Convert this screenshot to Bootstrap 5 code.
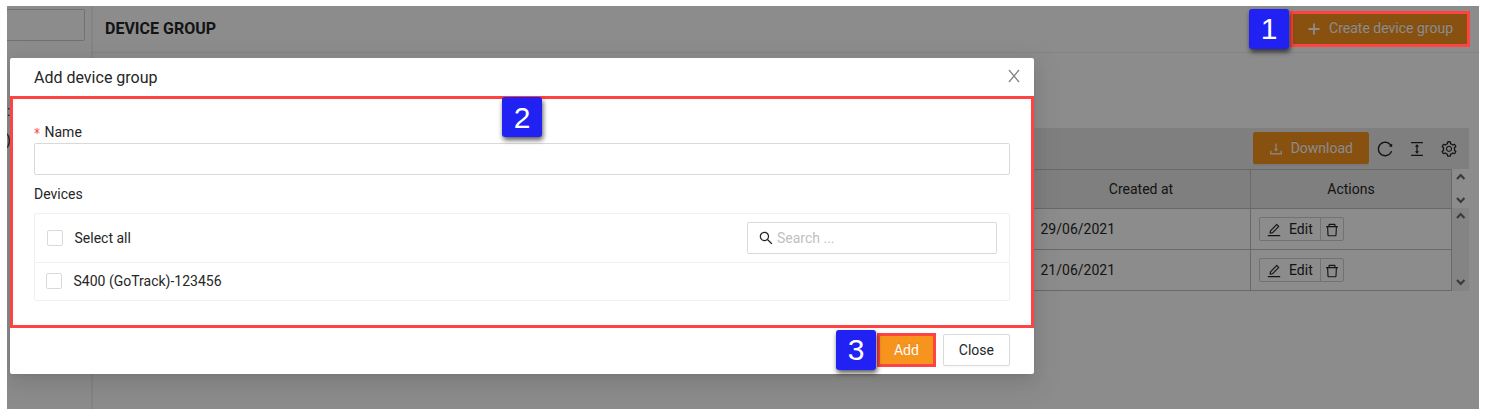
<!DOCTYPE html>
<html lang="en">
<head>
<meta charset="utf-8">
<title>Device group</title>
<link href="https://cdn.jsdelivr.net/npm/bootstrap@5.3.0/dist/css/bootstrap.min.css" rel="stylesheet">
<script src="https://cdn.jsdelivr.net/npm/bootstrap@5.3.0/dist/js/bootstrap.bundle.min.js" defer></script>
<style>
  body { font: 14px/22px Roboto, "Liberation Sans", sans-serif; color: #262626; background: #fff; width: 1486px; height: 415px; overflow: hidden; padding: 6px 7px; }
  svg { fill: currentColor; display: block; flex: none; }
  .frame { width: 1472px; height: 403px; overflow: hidden; }
  .side { width: 86px; border-right: 2px solid #f0f0f0; }
  .side-input { width: 78px; height: 32px; margin-top: 3px; border: 1px solid #d0d0d0; border-left: 0; border-radius: 0 2px 2px 0; }
  .side-cut { height: 22px; white-space: nowrap; }
  .page-head { height: 47px; border-bottom: 1px solid #f0f0f0; padding: 0 10px 0 12px; }
  .page-title { font-size: 16px; font-weight: 700; line-height: 24px; }
  .btn { --bs-btn-font-size: 14px; --bs-btn-line-height: 22px; --bs-btn-border-radius: 2px; --bs-btn-padding-y: 4px; --bs-btn-padding-x: 15px; height: 32px; }
  .btn-brand { --bs-btn-bg: #f7941d; --bs-btn-color: #fff; --bs-btn-border-color: #f7941d; --bs-btn-hover-bg: #f7941d; --bs-btn-hover-color: #fff; box-shadow: 0 2px 0 rgba(0,0,0,.045); text-shadow: 0 -1px 0 rgba(0,0,0,.12); }
  .btn-plain { --bs-btn-bg: #fff; --bs-btn-color: #262626; --bs-btn-border-color: #d9d9d9; box-shadow: 0 2px 0 rgba(0,0,0,.016); }
  .btn-icon { padding-left: 14px; }
  .btn-icon svg { margin: 1px 7px 0 0; }
  .page-head .btn { padding-top: 3px; padding-bottom: 5px; }
  .btn-marked { width: 59px; height: 34px; border: 3px solid #ff4343 !important; border-radius: 0; padding: 0; box-shadow: none; margin-right: 7px; }
  .grid-wrap { margin: 75px 10px 0 0; }
  .tools { height: 41px; background: #e8e8e8; padding-right: 11px; }
  .tools .btn { margin: 0 7px 1px 0; }
  .row-line { height: 41px; border-bottom: 1px solid #bfbfbf; }
  .head-line { height: 40px; border-top: 1px solid #bfbfbf; background: #e8e8e8; }
  .c-date { width: 217px; border-right: 1px solid #bfbfbf; padding-left: 6.500px; }
  .c-act { width: 201px; border-right: 1px solid #bfbfbf; padding-left: 8px; }
  .scroller { width: 17px; }
  .mini { height: 24px; border: 1px solid #d0d0d0; border-radius: 2px 0 0 2px; width: 62px; padding-left: 6px; }
  .mini svg { margin: 1px 7px 0 0; }
  .mini + .mini { margin-left: -1px; border-radius: 0 2px 2px 0; width: 24px; padding-left: 3px; }
  .shade { inset: 0; background: rgba(0,0,0,.45); }
  .dialog { left: 3px; top: 52px; width: 1024px; height: 316px; background: #fff; border-radius: 2px; box-shadow: 0 3px 6px -4px rgba(0,0,0,.12), 0 6px 16px 0 rgba(0,0,0,.08), 0 9px 28px 8px rgba(0,0,0,.05); }
  .dialog-head { height: 38px; padding: 0 14px 0 24px; font-size: 16px; }
  .dialog-body { height: 232px; border: 3px solid #ff4343; padding: 22px 21px 0; }
  .dialog-foot { height: 46px; padding: 0 24px 2px 0; }
  .field { height: 32px; border: 1px solid #d9d9d9; border-radius: 2px; }
  .search-field { width: 250px; padding-left: 10px; }
  .hint { color: #bfbfbf; }
  .star { width: 6px; height: 6px; margin: 0 4.500px 2px 0; stroke: #ff4d4f; }
  .list-box { border: 1px solid #f0f0f0; border-radius: 2px; height: 88px; margin-top: 8px; }
  .list-top { height: 49px; border-bottom: 1px solid #f0f0f0; padding: 0 12px; }
  .list-item { height: 36px; padding-left: 11px; }
  .tick { width: 16px; height: 16px; border: 1px solid #d9d9d9; border-radius: 2px; margin-right: 11.5px; }
  .step { width: 40px; height: 40px; background: #2121f3; color: #fff; border-radius: 3px; font: 30px/42px "Liberation Sans", sans-serif; text-align: center; box-shadow: 1px 3px 5px rgba(0,0,0,.65); }
  .step-1 { left: 1242px; top: 3px; }
  .step-2 { left: 495px; top: 91px; }
  .step-3 { left: 829px; top: 324px; }
  .step-1, .step-3 { line-height: 40px; }
  .frame-1 { left: 1283px; top: 5px; width: 180px; height: 36px; border: 3px solid #ff4343; }
</style>
</head>
<body>
<svg width="0" height="0" class="position-absolute">
  <symbol id="i-edit" viewBox="0 0 1024 1024"><path d="M257.7 752c2 0 4-.2 6-.5L431.9 722c2-.4 3.9-1.3 5.3-2.8l423.9-423.9a9.96 9.96 0 0 0 0-14.1L694.9 114.9c-1.9-1.9-4.4-2.9-7.1-2.9s-5.2 1-7.1 2.9L256.8 538.8c-1.5 1.5-2.4 3.3-2.8 5.3l-29.5 168.2a33.5 33.5 0 0 0 9.4 29.8c6.6 6.4 14.9 9.9 23.8 9.9zm67.4-174.4L687.8 215l73.3 73.3-362.7 362.6-88.9 15.7 15.6-89zM880 836H144c-17.7 0-32 14.3-32 32v36c0 4.4 3.6 8 8 8h784c4.4 0 8-3.6 8-8v-36c0-17.7-14.3-32-32-32z"/></symbol>
  <symbol id="i-trash" viewBox="0 0 1024 1024"><path d="M360 184h-8c4.400 0 8-3.600 8-8v8h304v-8c0 4.400 3.600 8 8 8h-8v72h72v-80c0-35.300-28.700-64-64-64H352c-35.300 0-64 28.700-64 64v80h72v-72zm504 72H160c-17.700 0-32 14.300-32 32v32c0 4.400 3.600 8 8 8h60.400l24.700 523c1.600 34.100 29.800 61 63.900 61h454c34.200 0 62.300-26.800 63.900-61l24.700-523H888c4.400 0 8-3.600 8-8v-32c0-17.700-14.300-32-32-32zM731.300 840H292.700l-24.200-512h487l-24.200 512z"/></symbol>
</svg>
<div class="frame position-relative">
  <div class="d-flex h-100">
    <div class="side flex-shrink-0">
      <div class="side-input"></div>
      <div class="side-cut" style="margin-top:59px">:</div>
      <div class="side-cut" style="margin-top:7px;margin-left:-1px">)</div>
    </div>
    <div class="flex-grow-1">
      <div class="page-head d-flex align-items-center justify-content-between">
        <div class="page-title">DEVICE GROUP</div>
        <button class="btn btn-brand btn-icon d-flex align-items-center">
          <svg width="16" height="16" viewBox="0 0 16 16"><path d="M7.100 2.500h1.800v4.600h4.600v1.800H8.900v4.600H7.100V8.900H2.500V7.100h4.600z"/></svg>Create device group</button>
      </div>
      <div class="grid-wrap">
        <div class="tools d-flex align-items-center justify-content-end">
          <button class="btn btn-brand btn-icon d-flex align-items-center">
            <svg width="16" height="16" viewBox="0 0 1024 1024"><path d="M505.700 661a8 8 0 0 0 12.600 0l112-141.700c4.100-5.200.4-12.900-6.300-12.900h-74.100V168c0-4.400-3.600-8-8-8h-60c-4.400 0-8 3.600-8 8v338.300H400c-6.700 0-10.400 7.700-6.300 12.900l112 141.800zM878 626h-60c-4.400 0-8 3.600-8 8v154H214V634c0-4.400-3.600-8-8-8h-60c-4.400 0-8 3.600-8 8v198c0 17.700 14.300 32 32 32h684c17.700 0 32-14.300 32-32V634c0-4.400-3.600-8-8-8z"/></svg>Download</button>
          <svg width="18" height="18" viewBox="0 0 1024 1024"><path d="M909.100 209.300l-56.400 44.100C775.800 155.100 656.200 92 521.900 92 290 92 102.300 279.500 102 511.500 101.700 743.700 289.800 932 521.900 932c181.300 0 335.800-115 394.600-276.100 1.500-4.200-.7-8.900-4.900-10.300l-56.700-19.500a8 8 0 0 0-10.100 4.800c-1.800 5-3.800 10-5.900 14.900-17.300 41-42.100 77.800-73.700 109.400A344.770 344.770 0 0 1 655.900 829c-42.300 17.900-87.400 27-133.800 27-46.500 0-91.500-9.100-133.800-27A341.500 341.500 0 0 1 279 755.200a342.160 342.160 0 0 1-73.700-109.400c-17.900-42.400-27-87.400-27-133.900s9.100-91.500 27-133.900c17.300-41 42.100-77.800 73.700-109.400 31.600-31.600 68.400-56.400 109.300-73.800 42.300-17.900 87.400-27 133.800-27 46.500 0 91.500 9.100 133.800 27a341.500 341.500 0 0 1 109.300 73.800c9.900 9.900 19.200 20.400 27.800 31.400l-60.200 47a8 8 0 0 0 3 14.100l175.600 43c5 1.200 9.900-2.600 9.900-7.700l.8-180.900c-.1-6.600-7.800-10.300-13-6.200z"/></svg>
          <svg width="18" height="18" viewBox="0 0 1024 1024" style="margin:0 14px"><path d="M840 836H184c-4.400 0-8 3.600-8 8v60c0 4.400 3.600 8 8 8h656c4.400 0 8-3.600 8-8v-60c0-4.400-3.600-8-8-8zm0-724H184c-4.400 0-8 3.600-8 8v60c0 4.400 3.600 8 8 8h656c4.400 0 8-3.600 8-8v-60c0-4.400-3.600-8-8-8zM610.800 378c6 0 9.400-7 5.700-11.700L515.700 238.700a7.140 7.140 0 0 0-11.300 0L403.600 366.300a7.230 7.230 0 0 0 5.700 11.700H476v268h-62.800c-6 0-9.400 7-5.700 11.700l100.800 127.500c2.900 3.700 8.500 3.700 11.300 0l100.800-127.500c3.700-4.700.4-11.700-5.700-11.700H548V378h62.800z"/></svg>
          <svg width="18" height="18" viewBox="0 0 1024 1024"><path d="M924.800 625.700l-65.500-56c3.100-19 4.700-38.400 4.700-57.800s-1.600-38.800-4.700-57.800l65.500-56a32.030 32.030 0 0 0 9.300-35.200l-.9-2.600a443.740 443.740 0 0 0-79.700-137.900l-1.800-2.100a32.120 32.120 0 0 0-35.100-9.500l-81.300 28.900c-30-24.600-63.500-44-99.700-57.600l-15.700-85a32.050 32.050 0 0 0-25.800-25.700l-2.700-.5c-52.100-9.400-106.900-9.400-159 0l-2.700.5a32.050 32.050 0 0 0-25.800 25.700l-15.800 85.400a351.860 351.860 0 0 0-99 57.400l-81.900-29.100a32 32 0 0 0-35.100 9.500l-1.800 2.100a446.020 446.020 0 0 0-79.700 137.900l-.9 2.600c-4.500 12.500-.8 26.500 9.300 35.200l66.300 56.600c-3.100 18.800-4.600 38-4.600 57.100 0 19.200 1.500 38.400 4.600 57.100L99 625.500a32.030 32.030 0 0 0-9.300 35.200l.9 2.600c18.100 50.400 44.900 96.900 79.700 137.900l1.800 2.100a32.120 32.120 0 0 0 35.100 9.500l81.900-29.100c29.800 24.500 63.100 43.900 99 57.400l15.800 85.400a32.050 32.050 0 0 0 25.800 25.700l2.700.5a449.400 449.400 0 0 0 159 0l2.700-.5a32.050 32.050 0 0 0 25.800-25.700l15.700-85a350 350 0 0 0 99.700-57.600l81.300 28.900a32 32 0 0 0 35.100-9.500l1.800-2.100c34.800-41.100 61.600-87.500 79.700-137.900l.9-2.600c4.500-12.300.8-26.300-9.300-35zM788.300 465.900c2.500 15.100 3.800 30.600 3.800 46.100s-1.300 31-3.800 46.100l-6.600 40.100 74.700 63.900a370.030 370.030 0 0 1-42.600 73.600L721 702.800l-31.400 25.800c-23.900 19.600-50.500 35-79.300 45.800l-38.100 14.300-17.900 97a377.500 377.500 0 0 1-85 0l-17.900-97.200-37.800-14.500c-28.500-10.800-55-26.200-78.700-45.700l-31.400-25.900-93.400 33.200c-17-22.900-31.200-47.600-42.600-73.600l75.500-64.500-6.500-40c-2.400-14.900-3.700-30.300-3.700-45.500 0-15.300 1.200-30.600 3.700-45.500l6.500-40-75.500-64.500c11.300-26.100 25.600-50.700 42.600-73.600l93.400 33.200 31.400-25.900c23.700-19.500 50.200-34.900 78.700-45.700l37.900-14.300 17.900-97.200c28.100-3.200 56.800-3.200 85 0l17.900 97 38.100 14.300c28.700 10.800 55.400 26.200 79.300 45.800l31.400 25.800 92.800-32.900c17 22.900 31.200 47.600 42.600 73.600L781.800 426l6.500 39.900zM512 326c-97.200 0-176 78.800-176 176s78.800 176 176 176 176-78.800 176-176-78.800-176-176-176zm79.200 255.200A111.600 111.600 0 0 1 512 614c-29.900 0-58-11.700-79.200-32.800A111.600 111.600 0 0 1 400 502c0-29.900 11.700-58 32.800-79.200C454 401.600 482.100 390 512 390c29.900 0 58 11.600 79.200 32.800A111.600 111.600 0 0 1 624 502c0 29.900-11.700 58-32.800 79.200z"/></svg>
        </div>
        <div class="d-flex justify-content-end">
          <div class="flex-grow-1">
            <div class="head-line row-line d-flex justify-content-end">
              <div class="c-date d-flex align-items-center justify-content-center ps-0" style="padding-right:2px">Created at</div>
              <div class="c-act d-flex align-items-center justify-content-center ps-0">Actions</div>
            </div>
            <div class="row-line d-flex justify-content-end">
              <div class="c-date d-flex align-items-center"><span>29/06/2021</span></div>
              <div class="c-act d-flex align-items-center">
                <div class="mini d-flex align-items-center"><svg width="16" height="16"><use href="#i-edit"/></svg>Edit</div>
                <div class="mini d-flex align-items-center"><svg width="16" height="16"><use href="#i-trash"/></svg></div>
              </div>
            </div>
            <div class="row-line d-flex justify-content-end">
              <div class="c-date d-flex align-items-center"><span>21/06/2021</span></div>
              <div class="c-act d-flex align-items-center">
                <div class="mini d-flex align-items-center"><svg width="16" height="16"><use href="#i-edit"/></svg>Edit</div>
                <div class="mini d-flex align-items-center"><svg width="16" height="16"><use href="#i-trash"/></svg></div>
              </div>
            </div>
          </div>
          <svg class="scroller" width="17" height="122" viewBox="0 0 17 122"><path fill="#f0f0f0" d="M0 39h17v83H0z"/><path fill="none" stroke="#6b6b6b" stroke-width="2.200" d="M5 10 8.700 6 12.400 10M5 29 8.700 33 12.400 29M5 49 8.700 45 12.400 49M5 111 8.700 115 12.400 111"/></svg>
        </div>
      </div>
    </div>
  </div>

  <div class="shade position-absolute"></div>

  <div class="dialog position-absolute">
    <div class="dialog-head d-flex align-items-center justify-content-between">
      <div style="line-height:20px;padding-top:2px">Add device group</div>
      <svg width="12" height="14" viewBox="0 0 12 14" style="margin-bottom:2px"><path fill="none" stroke="#858585" stroke-width="1.300" d="M1 1 11 13M11 1 1 13"/></svg>
    </div>
    <div class="dialog-body">
      <div class="d-flex align-items-center"><svg class="star" viewBox="0 0 6 6"><path d="M3 0v6M.5 1.200l5 3.600M5.500 1.200l-5 3.600"/></svg>Name</div>
      <div class="field"></div>
      <div class="mt-2">Devices</div>
      <div class="list-box">
        <div class="list-top d-flex align-items-center">
          <div class="tick"></div><span>Select all</span>
          <div class="field search-field ms-auto d-flex align-items-center">
            <svg width="16" height="16" viewBox="0 0 1024 1024" style="margin-right:3px"><path d="M909.600 854.500L649.900 594.800C690.200 542.700 712 479 712 412c0-80.200-31.300-155.400-87.900-212.100-56.600-56.700-132-87.900-212.100-87.900s-155.500 31.300-212.100 87.900C143.200 256.500 112 331.800 112 412c0 80.100 31.300 155.500 87.900 212.100C256.500 680.800 331.800 712 412 712c67 0 130.600-21.800 182.700-62l259.700 259.600a8.200 8.200 0 0 0 11.600 0l43.600-43.500a8.200 8.200 0 0 0 0-11.600zM570.400 570.400C528 612.700 471.800 636 412 636s-116-23.300-158.400-65.600C211.300 528 188 471.800 188 412s23.300-116.100 65.600-158.400C296 211.300 352.200 188 412 188s116.100 23.200 158.400 65.600S636 352.200 636 412s-23.300 116.100-65.600 158.400z"/></svg>
            <span class="hint">Search ...</span>
          </div>
        </div>
        <div class="list-item d-flex align-items-center">
          <div class="tick"></div><span>S400 (GoTrack)-123456</span>
        </div>
      </div>
    </div>
    <div class="dialog-foot d-flex align-items-center justify-content-end">
      <button class="btn btn-brand btn-marked">Add</button>
      <button class="btn btn-plain d-flex align-items-center">Close</button>
    </div>
  </div>

  <div class="frame-1 position-absolute"></div>
  <div class="step step-1 position-absolute">1</div>
  <div class="step step-2 position-absolute">2</div>
  <div class="step step-3 position-absolute">3</div>
</div>
</body>
</html>
